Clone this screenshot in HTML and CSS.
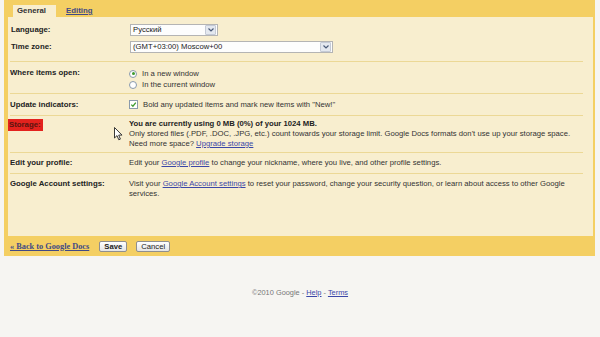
FILE: index.html
```html
<!doctype html>
<html>
<head>
	<meta charset="utf-8">
	<title>Settings</title>
	<link rel="stylesheet" href="styles.css">
</head>
<body>
	<div class="panel">
		<div class="tabs">
			<span class="tab tab-active">General</span>
			<a class="tab tab-link" href="#">Editing</a>
		</div>
		<div class="settings">
			<div class="row row-lang">
				<div class="pair">
					<div class="label">Language:</div>
					<div class="value">
						<div class="select select-lang"><span>Русский</span><span class="arrow"><svg width="6" height="4" viewBox="0 0 6 4"><path d="M0.5 0.5 L3 3 L5.5 0.5" fill="none" stroke="#4a5a78" stroke-width="1.2"/></svg></span></div>
					</div>
				</div>
				<div class="pair">
					<div class="label">Time zone:</div>
					<div class="value">
						<div class="select select-tz"><span>(GMT+03:00) Moscow+00</span><span class="arrow"><svg width="6" height="4" viewBox="0 0 6 4"><path d="M0.5 0.5 L3 3 L5.5 0.5" fill="none" stroke="#4a5a78" stroke-width="1.2"/></svg></span></div>
					</div>
				</div>
			</div>
			<div class="row row-open">
				<div class="label">Where items open:</div>
				<div class="value">
					<label class="opt"><span class="radio radio-on"></span>In a new window</label>
					<label class="opt"><span class="radio"></span>In the current window</label>
				</div>
			</div>
			<div class="row row-update">
				<div class="label">Update indicators:</div>
				<div class="value">
					<label class="opt"><span class="check"><svg width="7" height="7" viewBox="0 0 7 7"><path d="M1.3 3.6 L2.9 5.2 L5.8 1.6" fill="none" stroke="#3d9a2e" stroke-width="1.3"/></svg></span>Bold any updated items and mark new items with "New!"</label>
				</div>
			</div>
			<div class="row row-storage">
				<div class="label"><span class="mark">Storage:</span></div>
				<div class="value">
					<div class="strong">You are currently using 0 MB (0%) of your 1024 MB.</div>
					<div>Only stored files (.PDF, .DOC, .JPG, etc.) count towards your storage limit. Google Docs formats don't use up your storage space.</div>
					<div>Need more space? <a href="#">Upgrade storage</a></div>
				</div>
			</div>
			<div class="row row-profile">
				<div class="label">Edit your profile:</div>
				<div class="value">Edit your <a href="#">Google profile</a> to change your nickname, where you live, and other profile settings.</div>
			</div>
			<div class="row row-account">
				<div class="label">Google Account settings:</div>
				<div class="value"><span>Visit your <a href="#">Google Account settings</a> to reset your password, change your security question, or learn about access to other Google</span><br><span>services.</span></div>
			</div>
			<svg class="cursor" width="9" height="14" viewBox="0 0 9 14"><path d="M0.5 0.5 L0.5 11 L3 8.6 L4.8 12.8 L6.4 12.1 L4.7 8.1 L8 8.1 Z" fill="#fff" stroke="#222" stroke-width="0.9" stroke-linejoin="round"/></svg>
		</div>
		<div class="actions">
			<a class="back" href="#">« Back to Google Docs</a>
			<button class="btn btn-save">Save</button>
			<button class="btn">Cancel</button>
		</div>
	</div>
	<div class="footer">©2010 Google - <a href="#">Help</a> - <a href="#">Terms</a></div>
</body>
</html>
```

FILE: styles.css
```css
body {
	margin: 0;
	background: #f6f5f2;
	font-family: "Liberation Sans", Arial, sans-serif;
	font-size: 7.7px;
	color: #333;
}

a {
	color: #3b47a8;
}

.panel {
	margin: 0 5px 0 4px;
	background: #f4cf63;
	padding: 0 2px 0 4px;
}

.tabs {
	height: 17px;
	display: flex;
	align-items: flex-end;
	padding-left: 5px;
}

.tab {
	font-weight: bold;
	font-size: 7.8px;
	height: 12px;
	line-height: 12px;
}

.tab-active {
	background: #f8eecf;
	color: #333;
	padding: 0 10px 0 4px;
}

.tab-link {
	margin-left: 10px;
	color: #414a86;
}

.settings {
	position: relative;
	background: #f8eecf;
	height: 219px;
}

.row {
	display: grid;
	grid-template-columns: 119px 1fr;
	margin: 0 10px 0 2px;
	padding-left: 1px;
	border-bottom: 1px solid #ecd896;
	line-height: 10px;
}

.label {
	font-weight: bold;
	font-size: 7.8px;
	color: #222;
}

.row-lang {
	display: flex;
	flex-direction: column;
	gap: 5px;
	padding-top: 7px;
	padding-bottom: 8px;
}

.pair {
	display: grid;
	grid-template-columns: 119px 1fr;
	align-items: center;
	height: 12px;
}

.select {
	display: flex;
	align-items: center;
	justify-content: space-between;
	height: 12px;
	box-sizing: border-box;
	background: #fdfdfd;
	border: 1px solid #b4b4b4;
	padding-left: 2px;
	color: #222;
}

.select-lang {
	width: 88px;
}

.select-tz {
	width: 203px;
}

.arrow {
	display: flex;
	align-items: center;
	justify-content: center;
	width: 9px;
	height: 8px;
	margin-right: 1px;
	background: #e4e8ef;
	border: 1px solid #c4cad6;
	border-radius: 1px;
}

.row-open {
	padding: 6px 0 3px;
	line-height: 11px;
}

.row-open .label {
	line-height: 10px;
}

.opt {
	display: flex;
	align-items: center;
	gap: 5px;
}

.radio {
	width: 6px;
	height: 6px;
	border: 1px solid #8a9aac;
	border-radius: 50%;
	background: #fff;
	display: flex;
	align-items: center;
	justify-content: center;
}

.radio-on::after {
	content: "";
	width: 3px;
	height: 3px;
	border-radius: 50%;
	background: #3d9a2e;
}

.row-update {
	padding: 5px 0 5px;
	line-height: 11px;
}

.check {
	display: flex;
	width: 7px;
	height: 7px;
	border: 1px solid #8a9aac;
	background: #fff;
}

.row-storage {
	padding: 3px 0 3px;
}

.mark {
	display: inline-block;
	background: #e3221d;
	color: #5a1410;
	padding: 0 2px 1px 1px;
	margin-left: -2px;
	line-height: 11px;
}

.strong {
	font-weight: bold;
	color: #222;
}

.row-profile {
	padding: 5px 0 5px;
}

.row-account {
	padding: 5px 0 5px;
	border-bottom: 0;
}

.cursor {
	position: absolute;
	left: 106px;
	top: 110px;
}

.actions {
	height: 20px;
	display: flex;
	align-items: center;
	gap: 9px;
	padding-left: 2px;
}

.back {
	font-family: "Liberation Serif", "Times New Roman", serif;
	font-weight: bold;
	font-size: 8.3px;
	color: #414a86;
	margin-right: 1px;
}

.btn {
	font-family: "Liberation Sans", Arial, sans-serif;
	font-size: 7.7px;
	height: 11px;
	padding: 0 4px;
	line-height: 9px;
	border: 1px solid #8f8f8f;
	border-radius: 2px;
	background: linear-gradient(#ffffff, #e4e4e4);
	color: #222;
}

.btn-save {
	font-weight: bold;
}

.footer {
	margin-top: 32px;
	text-align: center;
	color: #777;
	font-size: 7.4px;
}
```
